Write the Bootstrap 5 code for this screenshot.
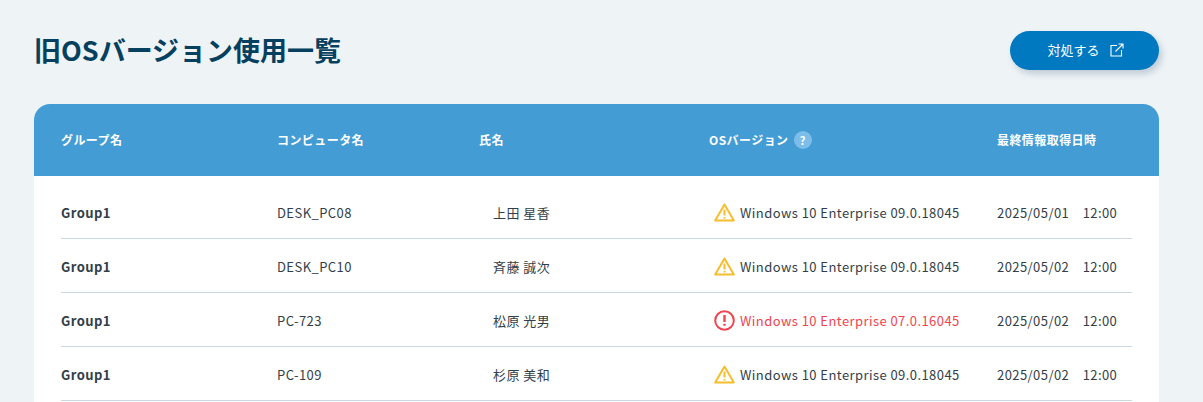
<!DOCTYPE html>
<html lang="ja">
<head>
<meta charset="utf-8">
<title>旧OSバージョン使用一覧</title>
<link rel="stylesheet" href="https://cdn.jsdelivr.net/npm/bootstrap@5.3.0/dist/css/bootstrap.min.css">
<style>
html,body{height:402px;overflow:hidden}
body{background:#eef3f6;font-family:"Noto Sans CJK JP","Noto Sans",sans-serif;color:#333e48;font-size:13px;letter-spacing:.43px}
.page-wrap{padding:30px 44px 0 34px}
.page-title{font-size:27px;font-weight:700;line-height:40px;color:#05405f;margin:0;letter-spacing:0}
.act-btn{width:149px;height:39px;border-radius:20px;background:#0079c1;color:#fff;font-size:13px;border:0;box-shadow:3px 4px 6px rgba(60,90,120,.25);padding:0 0 0 2px;gap:10px}
.panel{margin-top:34px;background:#fff;border-radius:16px 16px 0 0;height:300px}
.panel-head{height:72px;background:#439cd4;border-radius:16px 16px 0 0;padding:0 27px 1px;color:#fff;font-size:12px;font-weight:700}
.panel-body{padding:9px 27px 0}
.tr-row{height:54px;border-bottom:1px solid #c9d9e3;padding-top:2px}
.c1{width:216px}.c2{width:202px}.c3{width:230px}.c4{width:288px}.c5{width:135px}
.c3x{padding-left:14px}
.c4x{gap:5px;padding-left:5px}
.strong-cell{font-weight:700}
.danger-text{color:#f0444f}
.help-dot{width:18px;height:18px;border-radius:50%;background:#7cbde9;color:#fff;font-size:11px;margin-left:5px;line-height:18px;letter-spacing:0}
</style>
</head>
<body>
<div class="page-wrap">
  <div class="d-flex justify-content-between align-items-center">
    <h1 class="page-title">旧OSバージョン使用一覧</h1>
    <button class="act-btn d-flex align-items-center justify-content-center" type="button">対処する
      <svg width="14" height="14" viewBox="0 0 14 14" fill="none" stroke="#fff" stroke-width="1.1"><path d="M7 2.500H1v10.500h10.500V7"/><path d="M5.500 8.500 13 1M8.500 1H13v4.500"/></svg>
    </button>
  </div>
  <div class="panel">
    <div class="panel-head d-flex align-items-center">
      <div class="c1">グループ名</div>
      <div class="c2">コンピュータ名</div>
      <div class="c3">氏名</div>
      <div class="c4 d-flex align-items-center">OSバージョン <span class="help-dot text-center">?</span></div>
      <div class="c5">最終情報取得日時</div>
    </div>
    <div class="panel-body">
      <div class="tr-row d-flex align-items-center">
        <div class="c1 strong-cell">Group1</div><div class="c2">DESK_PC08</div><div class="c3 c3x">上田 星香</div>
        <div class="c4 c4x d-flex align-items-center"><svg width="21" height="19" viewBox="0 0 21 19" fill="none"><path d="M10.500 1.500 1.200 17.500h18.600z" stroke="#f6bd2c" stroke-width="2" stroke-linejoin="round"/><path d="M10.500 6.500v6M10.500 14v1.500" stroke="#f6bd2c" stroke-width="2"/></svg>Windows 10 Enterprise 09.0.18045</div>
        <div class="c5">2025/05/01　12:00</div>
      </div>
      <div class="tr-row d-flex align-items-center">
        <div class="c1 strong-cell">Group1</div><div class="c2">DESK_PC10</div><div class="c3 c3x">斉藤 誠次</div>
        <div class="c4 c4x d-flex align-items-center"><svg width="21" height="19" viewBox="0 0 21 19" fill="none"><path d="M10.500 1.500 1.200 17.500h18.600z" stroke="#f6bd2c" stroke-width="2" stroke-linejoin="round"/><path d="M10.500 6.500v6M10.500 14v1.500" stroke="#f6bd2c" stroke-width="2"/></svg>Windows 10 Enterprise 09.0.18045</div>
        <div class="c5">2025/05/02　12:00</div>
      </div>
      <div class="tr-row d-flex align-items-center">
        <div class="c1 strong-cell">Group1</div><div class="c2">PC-723</div><div class="c3 c3x">松原 光男</div>
        <div class="c4 c4x d-flex align-items-center danger-text"><svg width="21" height="21" viewBox="0 0 21 21" fill="none"><circle cx="10.500" cy="10.500" r="9.300" stroke="#f0444f" stroke-width="2"/><path d="M10.500 5v7M10.500 13.800v2" stroke="#f0444f" stroke-width="2.400"/></svg>Windows 10 Enterprise 07.0.16045</div>
        <div class="c5">2025/05/02　12:00</div>
      </div>
      <div class="tr-row d-flex align-items-center">
        <div class="c1 strong-cell">Group1</div><div class="c2">PC-109</div><div class="c3 c3x">杉原 美和</div>
        <div class="c4 c4x d-flex align-items-center"><svg width="21" height="19" viewBox="0 0 21 19" fill="none"><path d="M10.500 1.500 1.200 17.500h18.600z" stroke="#f6bd2c" stroke-width="2" stroke-linejoin="round"/><path d="M10.500 6.500v6M10.500 14v1.500" stroke="#f6bd2c" stroke-width="2"/></svg>Windows 10 Enterprise 09.0.18045</div>
        <div class="c5">2025/05/02　12:00</div>
      </div>
    </div>
  </div>
</div>
<script src="https://cdn.jsdelivr.net/npm/bootstrap@5.3.0/dist/js/bootstrap.bundle.min.js"></script>
</body>
</html>
